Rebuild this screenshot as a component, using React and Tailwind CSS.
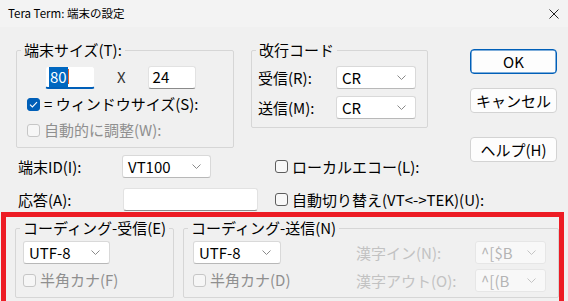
import React from "react"

const Check = ({ checked, disabled }) => (
  <span
    className={`flex h-[13px] w-[13px] shrink-0 items-center justify-center rounded-[3px] border ${
      checked
        ? "border-[#005fb8] bg-[#005fb8]"
        : disabled
        ? "border-[#c6c6c6] bg-[#f6f6f6]"
        : "border-[#5d5d5d] bg-[#f8f8f8]"
    }`}
  >
    {checked && (
      <svg width="9" height="7" viewBox="0 0 9 7" fill="none">
        <path d="M1 3.6 L3.4 6 L8 1.2" stroke="#fff" strokeWidth="1.1" />
      </svg>
    )}
  </span>
)

const CheckRow = ({ checked, disabled, children, className = "" }) => (
  <div className={`flex shrink-0 items-center ${className}`}>
    <Check checked={checked} disabled={disabled} />
    <span className={`ml-[4px] whitespace-nowrap ${disabled ? "text-[#8f8f8f]" : "text-black"}`}>{children}</span>
  </div>
)

const Chevron = ({ color }) => (
  <svg width="9" height="5" viewBox="0 0 9 5" fill="none">
    <path d="M0.5 0.5 L4.5 4.5 L8.5 0.5" stroke={color} strokeWidth="1" />
  </svg>
)

const Select = ({ value, disabled, className = "" }) => (
  <div
    className={`flex h-[23px] shrink-0 items-center justify-between rounded-[3px] border pl-[5px] pr-[9px] ${
      disabled
        ? "border-[#e6e6e6] bg-[#f8f8f8] text-[#b4b4b4]"
        : "border-[#d9d9d9] border-b-[#b8b8b8] bg-white text-black"
    } ${className}`}
  >
    <span className="whitespace-nowrap">{value}</span>
    <Chevron color={disabled ? "#c4c4c4" : "#8a8a8a"} />
  </div>
)

const Edit = ({ children, focused, className = "" }) => (
  <div
    className={`flex h-[23px] shrink-0 items-center rounded-[3px] bg-white ${
      focused ? "border border-[#f0f0f0] border-b-2 border-b-[#005fb8]" : "border border-[#e2e2e2] border-b-[#8a8a8a]"
    } ${className}`}
  >
    {children}
  </div>
)

const Button = ({ children, primary }) => (
  <button
    className={`flex h-[25px] w-[87px] items-center justify-center rounded-[4px] bg-[#fdfdfd] text-[15px] leading-none text-black ${
      primary ? "border border-[#005fb8] shadow-[inset_0_0_0_0.5px_#005fb8]" : "border border-[#d3d3d3]"
    }`}
  >
    {children}
  </button>
)

const Group = ({ label, className = "", children }) => (
  <fieldset className={`box-border shrink-0 rounded-[2px] border border-[#d6d6d6] ${className}`}>
    <legend className="ml-[4px] px-[3px] leading-[20px] whitespace-nowrap">{label}</legend>
    {children}
  </fieldset>
)

export default function App() {
  return (
    <div className="relative h-[301px] w-[568px] overflow-hidden bg-[#f0f0f0] font-['Noto_Sans_CJK_JP',sans-serif] text-[15px] leading-[20px] text-black">
      {/* title bar */}
      <div className="flex h-[27px] items-center justify-between bg-[#f3f3f3] pl-[8px] pr-[8px]">
        <span className="text-[11.5px] leading-none">Tera Term: 端末の設定</span>
        <svg width="10" height="10" viewBox="0 0 10 10" fill="none" className="mr-[1px]">
          <path d="M0.5 0.5 L9.5 9.5 M9.5 0.5 L0.5 9.5" stroke="#222" strokeWidth="1" />
        </svg>
      </div>

      {/* upper part */}
      <div className="flex pl-[16px] pt-[13px]">
        <div className="flex w-[412px] shrink-0 flex-col">
          <div className="flex items-start">
            <Group label="端末サイズ(T):" className="h-[108px] w-[218px]">
              <div className="mt-[6px] flex h-[22px] items-center">
                <Edit focused className="ml-[28px] w-[50px]">
                  <span className="ml-[3px] bg-[#0067c0] px-[1px] text-white">80</span>
                  <span className="h-[15px] w-[1px] bg-[#e0602a]" />
                </Edit>
                <span className="ml-[22px] text-[15px] text-[#333]">X</span>
                <Edit className="ml-[22px] w-[48px]">
                  <span className="ml-[4px]">24</span>
                </Edit>
              </div>
              <CheckRow checked className="ml-[10px] mt-[6px] h-[20px]">
                = ウィンドウサイズ(S):
              </CheckRow>
              <CheckRow disabled className="ml-[10px] mt-[6px] h-[20px]">
                自動的に調整(W):
              </CheckRow>
            </Group>

            <Group label="改行コード" className="ml-[17px] h-[88px] w-[177px]">
              <div className="mt-[6px] flex h-[23px] items-center">
                <span className="ml-[6px] w-[78px] shrink-0">受信(R):</span>
                <Select value="CR" className="w-[80px]" />
              </div>
              <div className="mt-[7px] flex h-[23px] items-center">
                <span className="ml-[6px] w-[78px] shrink-0">送信(M):</span>
                <Select value="CR" className="w-[80px]" />
              </div>
            </Group>
          </div>

          <div className="mt-[7px] flex h-[23px] items-center">
            <span className="w-[106px] shrink-0 pl-[2px]">端末ID(I):</span>
            <Select value="VT100" className="w-[89px]" />
            <CheckRow className="ml-[64px]">ローカルエコー(L):</CheckRow>
          </div>

          <div className="mt-[10px] flex h-[23px] items-center">
            <span className="w-[107px] shrink-0 pl-[2px]">応答(A):</span>
            <Edit className="w-[135px]" />
            <CheckRow className="ml-[17px]">自動切り替え(VT&lt;-&gt;TEK)(U):</CheckRow>
          </div>
        </div>

        <div className="ml-[42px] mt-[9px] flex shrink-0 flex-col">
          <Button primary>OK</Button>
          <div className="mt-[14px]">
            <Button>キャンセル</Button>
          </div>
          <div className="mt-[24px]">
            <Button>ヘルプ(H)</Button>
          </div>
        </div>
      </div>

      {/* encoding part */}
      <div className="mt-[7px] flex pl-[15px]">
        <Group label="コーディング-受信(E)" className="h-[80px] w-[159px]">
          <Select value="UTF-8" className="ml-[7px] mt-[3px] w-[87px]" />
          <CheckRow disabled className="ml-[7px] mt-[8px] h-[16px]">
            半角カナ(F)
          </CheckRow>
        </Group>

        <Group label="コーディング-送信(N)" className="ml-[9px] h-[80px] w-[376px]">
          <div className="flex">
            <div className="ml-[9px] w-[88px] shrink-0">
              <Select value="UTF-8" className="mt-[3px] w-[88px]" />
              <CheckRow disabled className="mt-[8px] h-[16px]">
                半角カナ(D)
              </CheckRow>
            </div>
            <div className="ml-[75px] shrink-0">
              <div className="mt-[3px] flex h-[23px] items-center">
                <span className="w-[119px] shrink-0 text-[#c2c2c2]">漢字イン(N):</span>
                <Select disabled value="^[$B" className="w-[71px]" />
              </div>
              <div className="mt-[5px] flex h-[23px] items-center">
                <span className="w-[119px] shrink-0 text-[#c2c2c2]">漢字アウト(O):</span>
                <Select disabled value="^[(B" className="w-[71px]" />
              </div>
            </div>
          </div>
        </Group>
      </div>

      {/* red highlight */}
      <div className="pointer-events-none absolute left-[1px] top-[212px] h-[95px] w-[563px] border-[5px] border-[#ed1c24]" />
    </div>
  )
}
